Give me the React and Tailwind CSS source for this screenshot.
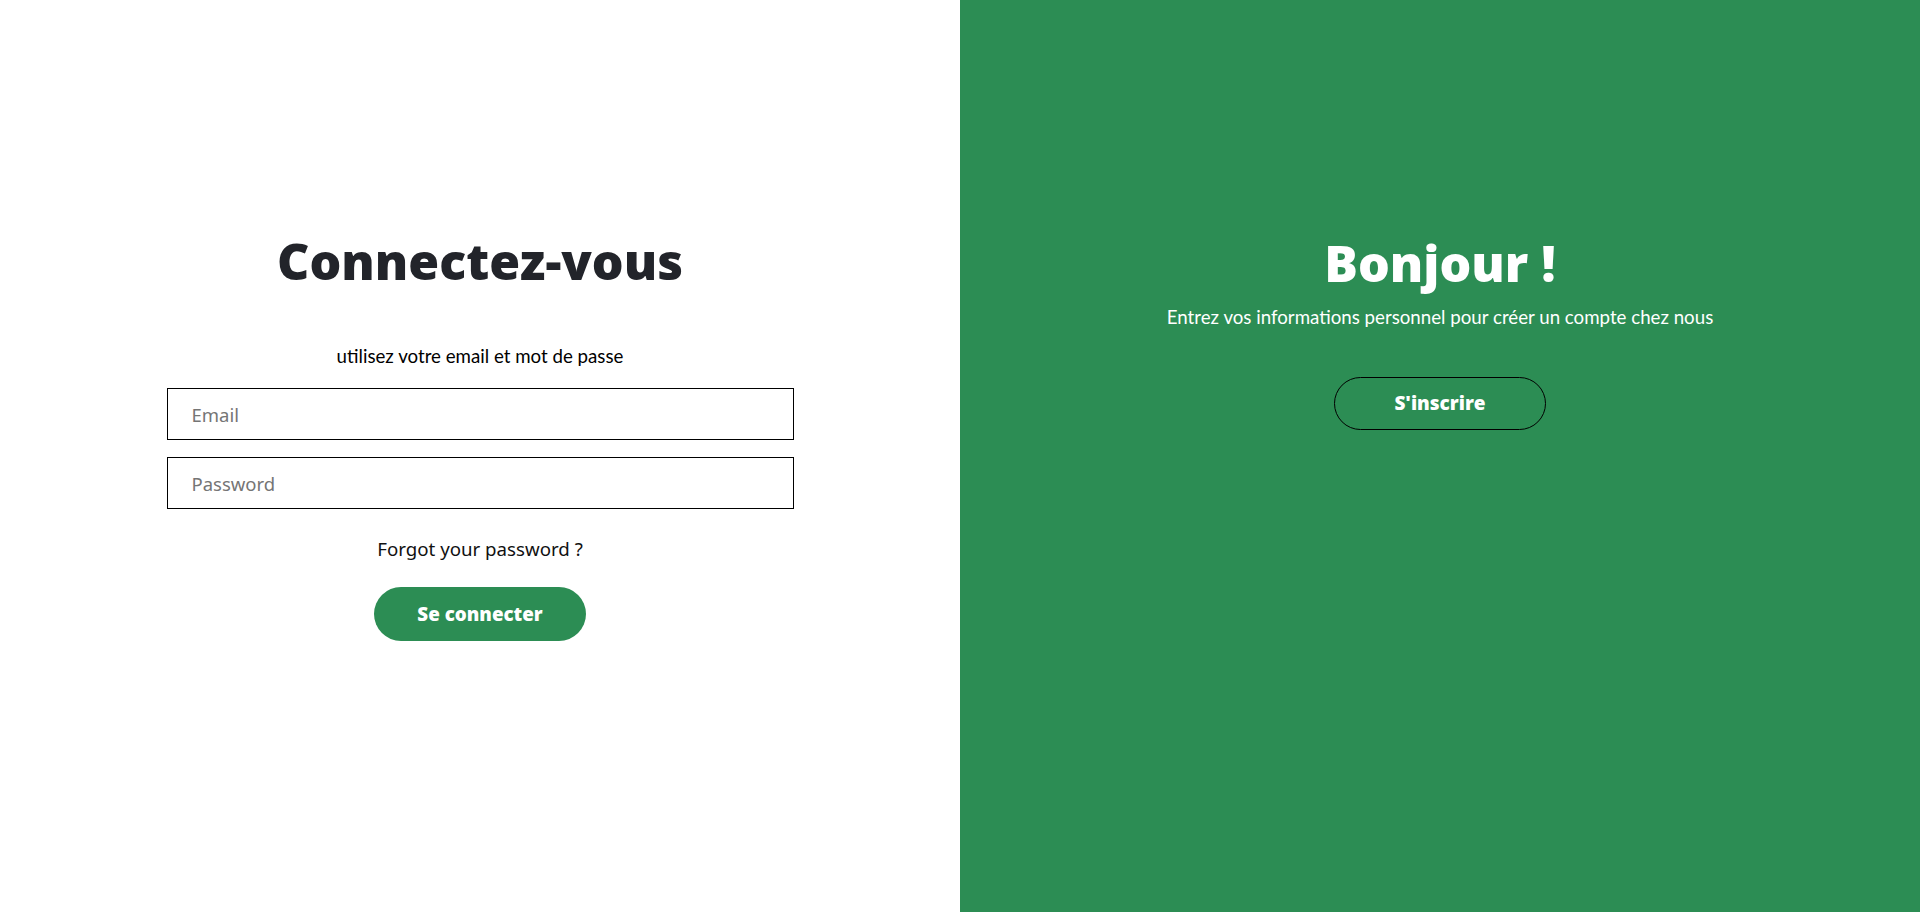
export default function App() {
  return (
    <div className="flex w-full h-[912px] overflow-hidden">
      {/* LEFT - LOGIN */}
      <div className="w-1/2 h-full bg-white flex flex-col items-center pt-[230px]">
        <h1 className="font-['Open_Sans',sans-serif] font-extrabold text-[50px] leading-[62px] text-[#22242a]">
          Connectez-vous
        </h1>
        <p className="mt-[52px] font-['Lato',sans-serif] text-[18.7px] leading-6 text-black">
          utilisez votre email et mot de passe
        </p>
        <input
          placeholder="Email"
          className="mt-5 w-[627px] h-[52px] border border-black px-6 font-['Noto_Sans',sans-serif] text-[18.5px] placeholder-[#757575] outline-none"
        />
        <input
          type="password"
          placeholder="Password"
          className="mt-[17px] w-[627px] h-[52px] border border-black px-6 font-['Noto_Sans',sans-serif] text-[18.5px] placeholder-[#757575] outline-none"
        />
        <a href="#" className="mt-[28px] font-['Noto_Sans',sans-serif] text-[18.7px] leading-6 text-[#111]">
          Forgot your password ?
        </a>
        <button className="mt-[26px] w-[212px] h-[54px] rounded-full bg-[#2c8d54] text-white font-['Open_Sans',sans-serif] font-extrabold text-[18.8px]">
          Se connecter
        </button>
      </div>

      {/* RIGHT - SIGNUP */}
      <div className="w-1/2 h-full bg-[#2c8d54] flex flex-col items-center pt-[232px]">
        <h1 className="font-['Open_Sans',sans-serif] font-extrabold text-[50px] leading-[62px] text-white">
          Bonjour !
        </h1>
        <p className="mt-[11px] font-['Lato',sans-serif] text-[18.7px] leading-6 text-white">
          Entrez vos informations personnel pour créer un compte chez nous
        </p>
        <button className="mt-12 w-[212px] h-[53px] rounded-full border border-black text-white font-['Open_Sans',sans-serif] font-extrabold text-[19px]">
          S'inscrire
        </button>
      </div>
    </div>
  );
}
